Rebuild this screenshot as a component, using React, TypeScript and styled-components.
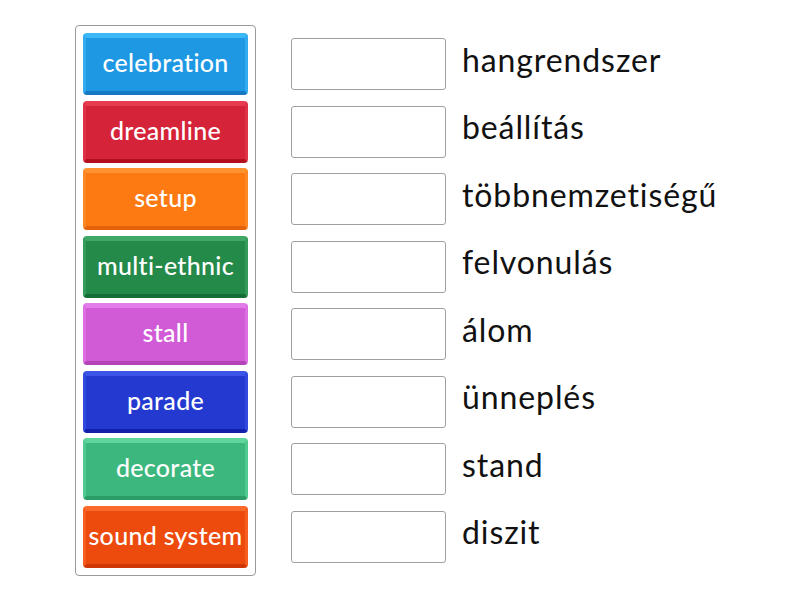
import React from "react";
import styled, { createGlobalStyle } from "styled-components";

const Global = createGlobalStyle`
  html, body { margin: 0; padding: 0; background: #fff; }
  body { font-family: Lato, "Open Sans", sans-serif; }
`;

const Page = styled.div`
  display: flex;
  align-items: flex-start;
  padding: 25px 0 0 75px;
  width: 800px;
  height: 600px;
  box-sizing: border-box;
`;

const Panel = styled.div`
  display: flex;
  flex-direction: column;
  gap: 5.5px;
  padding: 7px;
  width: 181px;
  box-sizing: border-box;
  border: 1px solid #9a9a9a;
  border-radius: 4px;
`;

type Tone = { base: string; top: string; bottom: string };

const Tile = styled.div<{ $tone: Tone }>`
  height: 62px;
  box-sizing: border-box;
  border-radius: 4px;
  display: flex;
  align-items: center;
  justify-content: center;
  color: #fff;
  font-family: Lato, sans-serif;
  font-size: 25px;
  font-weight: 500;
  letter-spacing: 0.3px;
  background: ${(p) => p.$tone.base};
  border-top: 5px solid ${(p) => p.$tone.top};
  border-left: 3px solid ${(p) => p.$tone.top}99;
  border-right: 3px solid ${(p) => p.$tone.top}99;
  border-bottom: 4px solid ${(p) => p.$tone.bottom};
  padding-bottom: 5px;
  white-space: nowrap;
`;

const Right = styled.div`
  display: flex;
  flex-direction: column;
  gap: 5.5px;
  padding-top: 8px;
  margin-left: 35px;
`;

const Row = styled.div`
  height: 62px;
  display: flex;
  align-items: center;
  gap: 16px;
`;

const Slot = styled.div`
  width: 155px;
  height: 52px;
  box-sizing: border-box;
  border: 1px solid #a0a0a0;
  border-radius: 3px;
  background: #fff;
`;

const Label = styled.span`
  font-family: Lato, sans-serif;
  font-size: 32px;
  letter-spacing: 0.9px;
  color: #111;
  padding-bottom: 10px;
`;

const tiles: { text: string; tone: Tone }[] = [
  { text: "celebration", tone: { base: "#1f98e4", top: "#3db8f7", bottom: "#1779c4" } },
  { text: "dreamline", tone: { base: "#d5233a", top: "#e63b50", bottom: "#b3101f" } },
  { text: "setup", tone: { base: "#fd7a12", top: "#ff9330", bottom: "#e3620a" } },
  { text: "multi-ethnic", tone: { base: "#238a4a", top: "#40a765", bottom: "#166e37" } },
  { text: "stall", tone: { base: "#d15bd6", top: "#e27ce8", bottom: "#b443b8" } },
  { text: "parade", tone: { base: "#2339cf", top: "#3c55e6", bottom: "#1420ab" } },
  { text: "decorate", tone: { base: "#3cb87e", top: "#5fd69c", bottom: "#2c9c66" } },
  { text: "sound system", tone: { base: "#ed4a0d", top: "#fb6a2a", bottom: "#cf3806" } },
];

const words = [
  "hangrendszer",
  "beállítás",
  "többnemzetiségű",
  "felvonulás",
  "álom",
  "ünneplés",
  "stand",
  "diszit",
];

export default function App() {
  return (
    <>
      <Global />
      <Page>
        <Panel>
          {tiles.map((t) => (
            <Tile key={t.text} $tone={t.tone}>
              {t.text}
            </Tile>
          ))}
        </Panel>
        <Right>
          {words.map((w) => (
            <Row key={w}>
              <Slot />
              <Label>{w}</Label>
            </Row>
          ))}
        </Right>
      </Page>
    </>
  );
}
